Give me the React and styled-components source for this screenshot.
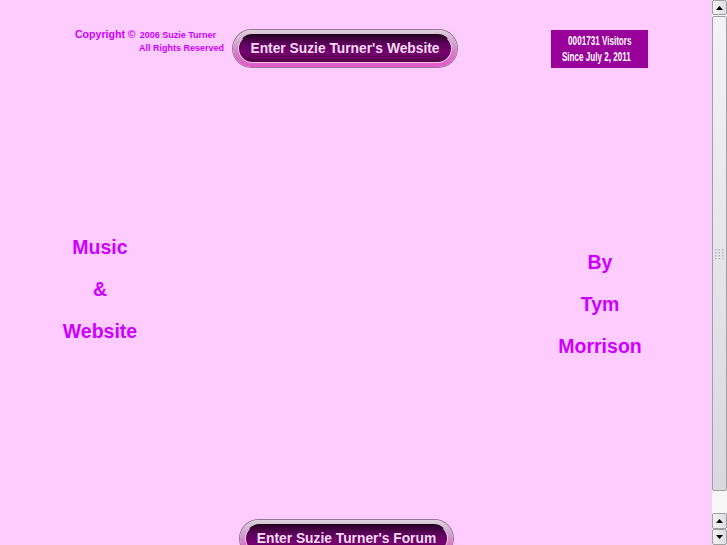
import React from "react";
import styled, { createGlobalStyle } from "styled-components";

const Global = createGlobalStyle`
  html, body { margin: 0; padding: 0; }
  body {
    background: #ffccff;
    width: 727px;
    height: 545px;
    overflow: hidden;
    font-family: "Liberation Sans", Arial, sans-serif;
  }
`;

const Page = styled.div`
  width: 712px;
  height: 545px;
  overflow: hidden;
  display: flex;
  flex-direction: column;
  & > * { flex-shrink: 0; }
`;

const Header = styled.div`
  display: flex;
  align-items: flex-start;
  padding-top: 30px;
  height: 38px;
`;

const CopyBlock = styled.div`
  width: 224px;
  text-align: right;
  color: #cc00ff;
  font-weight: bold;
  margin-top: -3px;
`;

const CopyLine = styled.div`
  font-size: ${(p) => p.$size}px;
  line-height: ${(p) => p.$lh}px;
  padding-right: ${(p) => p.$pr || 0}px;
  white-space: nowrap;
`;

const Small = styled.span`
  font-size: 9px;
  margin-left: 1px;
`;

const PillOuter = styled.div`
  box-sizing: border-box;
  width: ${(p) => p.$w}px;
  height: 37px;
  margin-left: ${(p) => p.$ml}px;
  border-radius: 19px;
  padding: 4px 5px;
  background: linear-gradient(#dcd2dc 0%, #cfa8cc 35%, #d872c6 70%, #e458cc 100%);
  box-shadow: 0 0 0 1px #9a7494;
`;

const PillInner = styled.div`
  height: 100%;
  box-sizing: border-box;
  border-radius: 15px;
  border: 1px solid #ecc4e6;
  border-top-color: #200018;
  background: linear-gradient(#2a0028 0%, #5a0058 30%, #760070 65%, #520048 100%);
  display: flex;
  align-items: center;
  justify-content: center;
  color: #f2dcf0;
  font-weight: bold;
  font-size: 13.8px;
  white-space: nowrap;
`;

const Counter = styled.div`
  margin-left: 94px;
  width: 97px;
  height: 38px;
  background: #990099;
  color: #ffffff;
  font-family: "Liberation Sans", Arial, sans-serif;
  font-weight: bold;
  font-size: 13.5px;
  line-height: 16px;
  display: flex;
  flex-direction: column;
  align-items: center;
  justify-content: center;
  overflow: hidden;
`;

const CounterLine = styled.div`
  margin-left: ${(p) => p.$ml || 0}px;
  white-space: nowrap;
  transform: scaleX(0.6);
`;

const Middle = styled.div`
  display: flex;
  align-items: flex-start;
  padding-top: 169px;
  height: 283px;
`;

const Column = styled.div`
  width: ${(p) => p.$w}px;
  margin-left: ${(p) => p.$ml}px;
  margin-top: ${(p) => p.$mt}px;
  display: flex;
  flex-direction: column;
  align-items: center;
  gap: 21px;
  color: #cc00ff;
  font-weight: bold;
  font-size: 19.5px;
  line-height: 21px;
`;

const Footer = styled.div`
  display: flex;
`;

const Scrollbar = styled.div`
  position: fixed;
  top: 0;
  right: 0;
  width: 15px;
  height: 545px;
  background: #f4f4f4;
  display: flex;
  flex-direction: column;
`;

const ArrowBtn = styled.div`
  box-sizing: border-box;
  height: ${(p) => p.$h}px;
  border: 1px solid #a0a0a0;
  border-radius: 2px;
  background: linear-gradient(90deg, #f4f4f6, #dcdde2);
  display: flex;
  align-items: center;
  justify-content: center;
`;

const Thumb = styled.div`
  box-sizing: border-box;
  height: 475px;
  margin-top: 1px;
  border: 1px solid #a0a0a0;
  border-radius: 2px;
  background: linear-gradient(#f2f3f7, #d8d9de);
  display: flex;
  align-items: center;
  justify-content: center;
`;

const Track = styled.div`
  flex: 1;
  background: #f6f6f6;
`;

const Arrow = ({ down }) => (
  <svg width="7" height="4" viewBox="0 0 7 4">
    <path d={down ? "M0 0 L7 0 L3.5 4 Z" : "M0 4 L7 4 L3.5 0 Z"} fill="#000" />
  </svg>
);

const Grip = () => (
  <svg width="9" height="10" viewBox="0 0 9 10">
    {[0, 1, 2, 3].map((r) =>
      [0, 1, 2].map((c) => (
        <rect key={`${r}-${c}`} x={c * 3.5} y={r * 3} width="1.5" height="1.5" fill="#b0b0b8" />
      ))
    )}
  </svg>
);

export default function App() {
  return (
    <>
      <Global />
      <Page>
        <Header>
          <CopyBlock>
            <CopyLine $size={10.6} $lh={14} $pr={8}>
              Copyright © <Small>2006 Suzie Turner</Small>
            </CopyLine>
            <CopyLine $size={9} $lh={12}>All Rights Reserved</CopyLine>
          </CopyBlock>
          <PillOuter $w={224} $ml={9}>
            <PillInner>Enter Suzie Turner's Website</PillInner>
          </PillOuter>
          <Counter>
            <CounterLine $ml={0}>0001731 Visitors</CounterLine>
            <CounterLine $ml={-6}>Since July 2, 2011</CounterLine>
          </Counter>
        </Header>
        <Middle>
          <Column $w={100} $ml={50} $mt={0}>
            <div>Music</div>
            <div>&amp;</div>
            <div>Website</div>
          </Column>
          <Column $w={100} $ml={400} $mt={15}>
            <div>By</div>
            <div>Tym</div>
            <div>Morrison</div>
          </Column>
        </Middle>
        <Footer>
          <PillOuter $w={213} $ml={240}>
            <PillInner>Enter Suzie Turner's Forum</PillInner>
          </PillOuter>
        </Footer>
      </Page>
      <Scrollbar>
        <ArrowBtn $h={15}>
          <Arrow />
        </ArrowBtn>
        <Thumb>
          <Grip />
        </Thumb>
        <Track />
        <ArrowBtn $h={16}>
          <Arrow />
        </ArrowBtn>
        <ArrowBtn $h={16}>
          <Arrow down />
        </ArrowBtn>
      </Scrollbar>
    </>
  );
}
